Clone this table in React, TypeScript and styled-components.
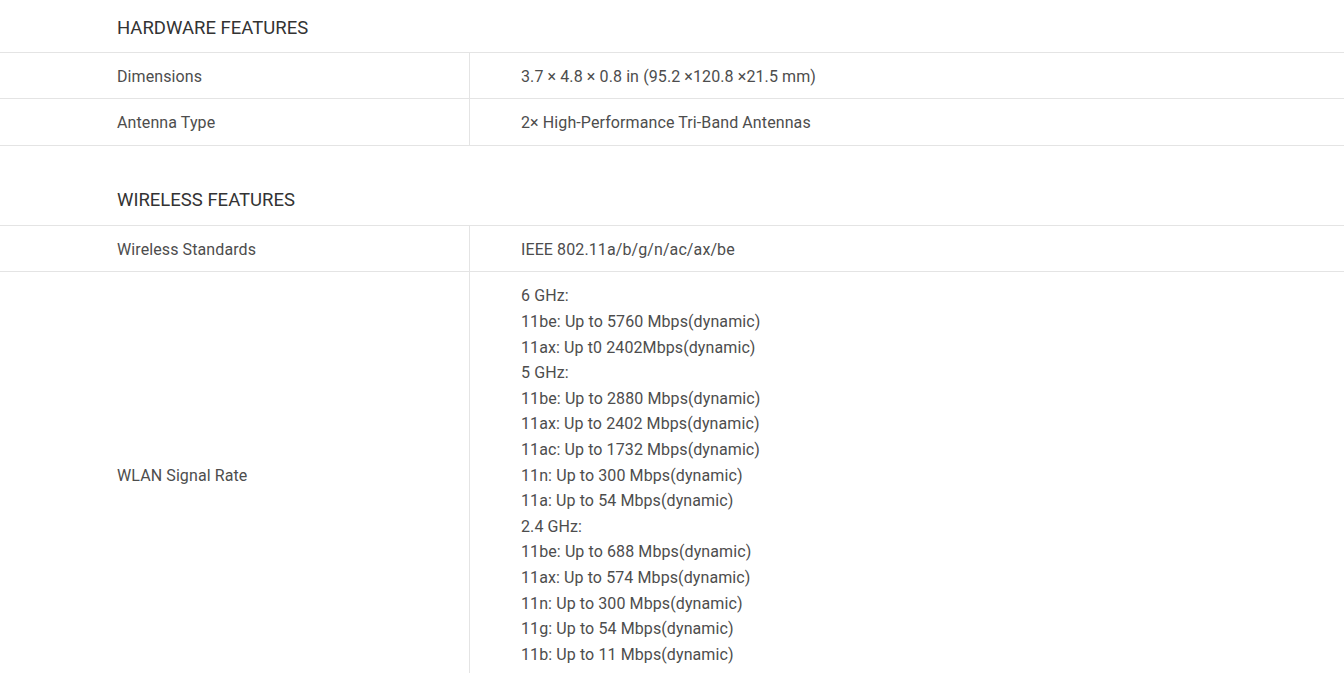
import React from "react";
import styled, { createGlobalStyle } from "styled-components";

const Global = createGlobalStyle`
  html, body { margin: 0; padding: 0; background: #fff; }
  body { font-family: Roboto, "Liberation Sans", Arial, sans-serif; }
`;

const Page = styled.div`
  width: 100%;
  overflow: hidden;
`;

const Section = styled.section`
  & + & { margin-top: 27px; }
`;

const Heading = styled.h3`
  margin: 0;
  height: 53px;
  box-sizing: border-box;
  display: flex;
  align-items: center;
  padding: 3px 0 0 117px;
  font-size: 18.5px;
  font-weight: 400;
  color: #333;
  border-bottom: 1px solid #e4e4e4;
`;

const Row = styled.div`
  display: grid;
  grid-template-columns: 470px 1fr;
  border-bottom: 1px solid #e4e4e4;
`;

const Label = styled.div`
  padding: 11px 0 8.9px 117px;
  font-size: 16px;
  line-height: 25.6px;
  letter-spacing: 0.1px;
  color: #4d4d4d;
  border-right: 1px solid #e4e4e4;
  display: flex;
  align-items: center;
`;

const Value = styled.div`
  padding: 11px 0 8.9px 51px;
  font-size: 16px;
  line-height: 25.6px;
  letter-spacing: 0.1px;
  color: #4d4d4d;
`;

const Line = styled.div``;

type Spec = { label: string; value: string[] };

const sections: { title: string; rows: Spec[] }[] = [
  {
    title: "HARDWARE FEATURES",
    rows: [
      { label: "Dimensions", value: ["3.7 × 4.8 × 0.8 in (95.2 ×120.8 ×21.5 mm)"] },
      { label: "Antenna Type", value: ["2× High-Performance Tri-Band Antennas"] },
    ],
  },
  {
    title: "WIRELESS FEATURES",
    rows: [
      { label: "Wireless Standards", value: ["IEEE 802.11a/b/g/n/ac/ax/be"] },
      {
        label: "WLAN Signal Rate",
        value: [
          "6 GHz:",
          "11be: Up to 5760 Mbps(dynamic)",
          "11ax: Up t0 2402Mbps(dynamic)",
          "5 GHz:",
          "11be: Up to 2880 Mbps(dynamic)",
          "11ax: Up to 2402 Mbps(dynamic)",
          "11ac: Up to 1732 Mbps(dynamic)",
          "11n: Up to 300 Mbps(dynamic)",
          "11a: Up to 54 Mbps(dynamic)",
          "2.4 GHz:",
          "11be: Up to 688 Mbps(dynamic)",
          "11ax: Up to 574 Mbps(dynamic)",
          "11n: Up to 300 Mbps(dynamic)",
          "11g: Up to 54 Mbps(dynamic)",
          "11b: Up to 11 Mbps(dynamic)",
        ],
      },
    ],
  },
];

export default function App() {
  return (
    <Page>
      <Global />
      {sections.map((s) => (
        <Section key={s.title}>
          <Heading>{s.title}</Heading>
          {s.rows.map((r) => (
            <Row key={r.label}>
              <Label>{r.label}</Label>
              <Value>
                {r.value.map((v, i) => (
                  <Line key={i}>{v}</Line>
                ))}
              </Value>
            </Row>
          ))}
        </Section>
      ))}
    </Page>
  );
}
